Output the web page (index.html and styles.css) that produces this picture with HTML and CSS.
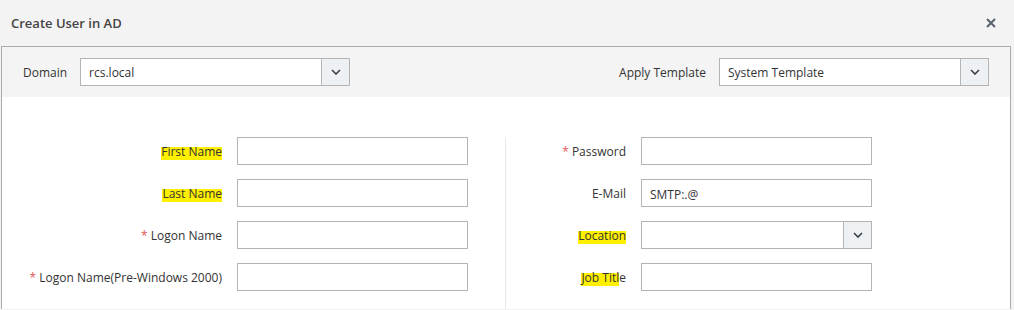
FILE: index.html
```html
<!DOCTYPE html>
<html lang="en">
<head>
    <meta charset="UTF-8">
    <title>Create User in AD</title>
    <link rel="stylesheet" href="styles.css">
</head>
<body>
    <div class="dialog-head">
        <span class="dialog-title">Create User in AD</span>
        <svg class="close" width="10" height="10" viewBox="0 0 10 10">
            <path d="M1 1 L9 9 M9 1 L1 9" stroke="#59626c" stroke-width="2" fill="none"/>
        </svg>
    </div>

    <div class="dialog-box">
        <div class="toolbar">
            <div class="tool-group">
                <label class="tool-label">Domain</label>
                <div class="select">
                    <span class="select-value">rcs.local</span>
                    <span class="select-btn">
                        <svg width="10" height="6" viewBox="0 0 10 6"><path d="M1 1 L5 5 L9 1" stroke="#3a3f45" stroke-width="1.6" fill="none"/></svg>
                    </span>
                </div>
            </div>
            <div class="tool-group">
                <label class="tool-label">Apply Template</label>
                <div class="select">
                    <span class="select-value">System Template</span>
                    <span class="select-btn">
                        <svg width="10" height="6" viewBox="0 0 10 6"><path d="M1 1 L5 5 L9 1" stroke="#3a3f45" stroke-width="1.6" fill="none"/></svg>
                    </span>
                </div>
            </div>
        </div>

        <div class="form-body">
            <div class="col col-left">
                <div class="row">
                    <label class="field-label"><span class="mark">First Name</span></label>
                    <input class="field" type="text">
                </div>
                <div class="row">
                    <label class="field-label"><span class="mark">Last Name</span></label>
                    <input class="field" type="text">
                </div>
                <div class="row">
                    <label class="field-label"><span class="req">*</span> Logon Name</label>
                    <input class="field" type="text">
                </div>
                <div class="row">
                    <label class="field-label"><span class="req">*</span> Logon Name(Pre-Windows 2000)</label>
                    <input class="field" type="text">
                </div>
            </div>
            <div class="col col-right">
                <div class="row">
                    <label class="field-label"><span class="req">*</span> Password</label>
                    <input class="field" type="password">
                </div>
                <div class="row">
                    <label class="field-label">E-Mail</label>
                    <input class="field field-mail" type="text" value="SMTP:.@">
                </div>
                <div class="row">
                    <label class="field-label"><span class="mark">Location</span></label>
                    <div class="select select-field">
                        <span class="select-value"></span>
                        <span class="select-btn">
                            <svg width="10" height="6" viewBox="0 0 10 6"><path d="M1 1 L5 5 L9 1" stroke="#3a3f45" stroke-width="1.6" fill="none"/></svg>
                        </span>
                    </div>
                </div>
                <div class="row">
                    <label class="field-label"><span class="mark">Job Titl</span>e</label>
                    <input class="field" type="text">
                </div>
            </div>
        </div>
    </div>
</body>
</html>
```

FILE: styles.css
```css
body {
    margin: 0;
    background: #f3f3f3;
    font-family: 'Open Sans', 'Liberation Sans', sans-serif;
    font-size: 12px;
    color: #333;
}

.dialog-head {
    height: 46px;
    display: flex;
    align-items: center;
    justify-content: space-between;
    padding: 0 18px 0 11px;
}

.dialog-title {
    font-size: 13px;
    font-weight: 600;
    color: #444;
}

.close {
    display: block;
}

.dialog-box {
    width: 1008px;
    margin-left: 1px;
    border: 1px solid #ababab;
    border-bottom: none;
    background: #fff;
}

.toolbar {
    display: flex;
    justify-content: space-between;
    align-items: center;
    height: 50px;
    padding: 0 21px;
    background: #f4f4f4;
}

.tool-group {
    display: flex;
    align-items: center;
}

.tool-label {
    margin-right: 13px;
    color: #333;
}

.select {
    display: flex;
    width: 268px;
    height: 26px;
    border: 1px solid #b4b4b4;
    background: #fff;
}

.select-value {
    flex: 1;
    padding: 0 8px;
    line-height: 28px;
    color: #333;
}

.select-btn {
    width: 27px;
    border-left: 1px solid #b4b4b4;
    background: #eef1f3;
    display: flex;
    align-items: center;
    justify-content: center;
}

.form-body {
    display: flex;
    padding: 40px 0 0;
    height: 172px;
}

.col-left {
    width: 503px;
}

.col-right {
    border-left: 1px solid #e8e8e8;
    padding-bottom: 13px;
}

.row {
    display: flex;
    align-items: center;
    height: 28px;
    margin-bottom: 14px;
}

.field-label {
    text-align: right;
    margin-right: 15px;
    color: #333;
    white-space: nowrap;
}

.col-left .field-label {
    width: 220px;
}

.col-right .field-label {
    width: 120px;
}

.req {
    color: #e05555;
}

.mark {
    background: linear-gradient(to bottom, transparent 25%, #fff000 25%, #fff000 98%, transparent 98%);
}

.field {
    box-sizing: border-box;
    width: 231px;
    height: 28px;
    border: 1px solid #b4b4b4;
    padding: 3px 8px 0;
    margin: 0;
    font-family: inherit;
    font-size: 12px;
    color: #333;
    outline: none;
}

.select-field {
    width: 229px;
}
```
